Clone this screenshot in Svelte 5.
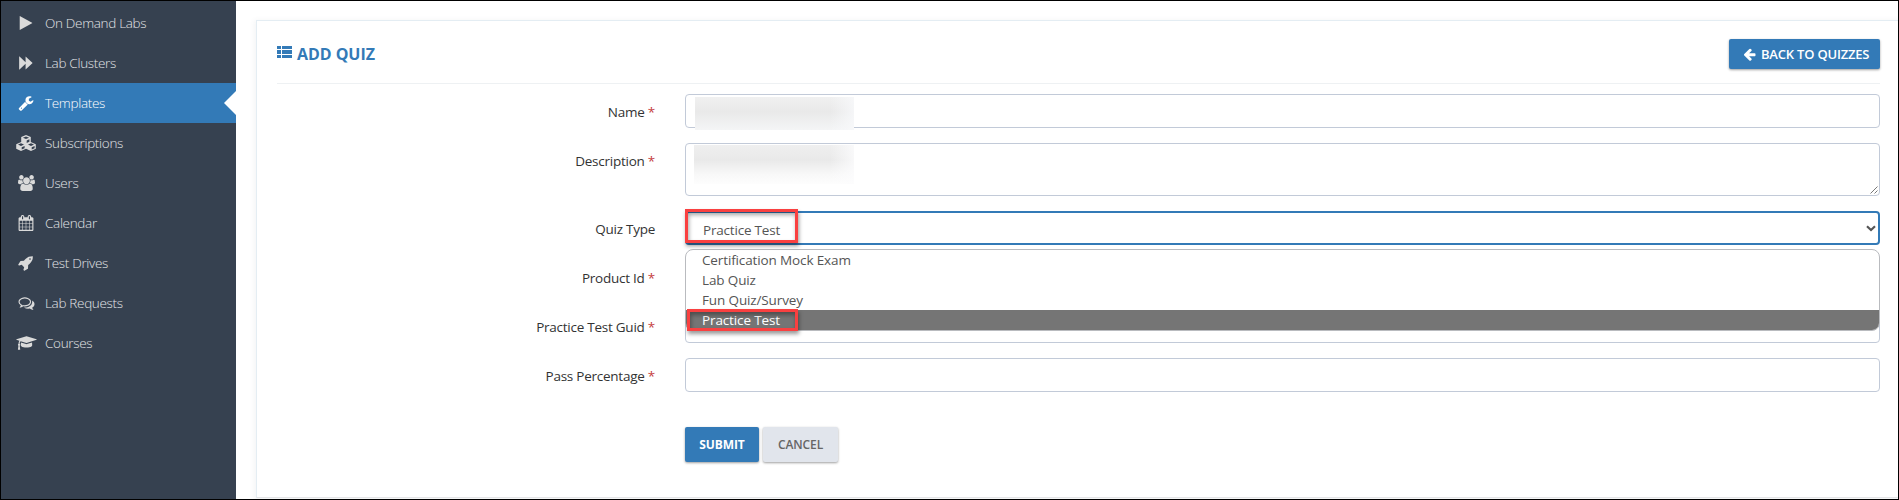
<script>
  const nav = [
    { label: 'On Demand Labs', box: '0 0 1792 1792', w: 16, d: 'M1576 927l-1328 738q-23 13-39.500 3t-16.500-36v-1472q0-26 16.500-36t39.500 3l1328 738q23 13 23 31t-23 31z' },
    { label: 'Lab Clusters', box: '0 0 1792 1792', w: 16, d: 'M170 160L850 820V160L1610 860Q1640 896 1610 932L850 1632V972L170 1632Q128 1660 128 1600V192Q128 132 170 160z' },
    { label: 'Templates', active: true, box: '0 0 1792 1792', w: 16, d: 'M448 1472q0-26-19-45t-45-19-45 19-19 45 19 45 45 19 45-19 19-45zm644-420l-682 682q-37 37-90 37-52 0-91-37l-106-108q-38-36-38-90 0-53 38-91l681-681q39 98 114.500 173.500t173.500 114.500zm634-435q0 39-23 106-47 134-164.500 217.500t-258.500 83.500q-185 0-316.500-131.500t-131.500-316.500 131.500-316.500 316.500-131.500q58 0 121.500 16.500t107.500 46.500q16 11 16 28t-16 28l-293 169v224l193 107q5-3 79-48.500t135.500-81 70.500-35.500q15 0 23.500 10t8.500 25z' },
    { label: 'Subscriptions', box: '0 0 20 16', w: 20, d: 'M10 0l4.800 2v5L19.800 9.200v4.600L15 16l-5-2.300L5 16 .2 13.800V9.200L5.200 7V2zM10 1.500L6.900 2.800 10 4.100l3.100-1.300zM10.700 5.500v2.400l2.700-1.200V4.300zM5 8.300L2 9.600 5 10.900 8 9.600zM5.700 12.200v2.300l2.900-1.300v-2.300zM15 8.300L12 9.600l3 1.300 3-1.300zM15.700 12.200v2.300l2.900-1.300v-2.300z' },
    { label: 'Users', box: '0 0 1920 1792', w: 17, d: 'M593 896q-162 5-265 128h-134q-82 0-138-40.500t-56-118.500q0-353 124-353 6 0 43.500 21t97.500 42.500 119 21.500q67 0 133-23-5 37-5 66 0 139 81 256zm1071 637q0 120-73 189.500t-194 69.500h-874q-121 0-194-69.500t-73-189.500q0-53 3.500-103.500t14-109 26.500-108.500 43-97.500 62-81 85.500-53.500 111.500-20q10 0 43 21.500t73 48 107 48 135 21.500 135-21.500 107-48 73-48 43-21.500q61 0 111.500 20t85.500 53.500 62 81 43 97.500 26.500 108.500 14 109 3.500 103.500zm-1024-1277q0 106-75 181t-181 75-181-75-75-181 75-181 181-75 181 75 75 181zm704 384q0 159-112.500 271.500t-271.500 112.500-271.500-112.500-112.500-271.500 112.500-271.500 271.500-112.500 271.500 112.500 112.500 271.500zm576 225q0 78-56 118.500t-138 40.500h-134q-103-123-265-128 81-117 81-256 0-29-5-66 66 23 133 23 59 0 119-21.500t97.500-42.500 43.500-21q124 0 124 353zm-128-609q0 106-75 181t-181 75-181-75-75-181 75-181 181-75 181 75 75 181z' },
    { label: 'Calendar', box: '0 0 1792 1792', w: 16, d: 'M192 1664h288v-288h-288v288zm352 0h320v-288h-320v288zm-352-352h288v-320h-288v320zm352 0h320v-320h-320v320zm-352-384h288v-288h-288v288zm736 736h320v-288h-320v288zm-384-736h320v-288h-320v288zm768 736h288v-288h-288v288zm-384-352h320v-320h-320v320zm-352-864v-288q0-13-9.500-22.500t-22.500-9.500h-64q-13 0-22.500 9.500t-9.500 22.500v288q0 13 9.500 22.500t22.500 9.500h64q13 0 22.500-9.500t9.500-22.500zm736 864h288v-320h-288v320zm-384-384h320v-288h-320v288zm384 0h288v-288h-288v288zm32-480v-288q0-13-9.500-22.500t-22.500-9.500h-64q-13 0-22.500 9.500t-9.500 22.500v288q0 13 9.500 22.500t22.500 9.500h64q13 0 22.500-9.500t9.500-22.500zm384-64v1280q0 52-38 90t-90 38h-1408q-52 0-90-38t-38-90v-1280q0-52 38-90t90-38h128v-96q0-66 47-113t113-47h64q66 0 113 47t47 113v96h384v-96q0-66 47-113t113-47h64q66 0 113 47t47 113v96h128q52 0 90 38t38 90z' },
    { label: 'Test Drives', box: '0 0 1792 1792', w: 16, d: 'M1440 448q0-40-28-68t-68-28-68 28-28 68 28 68 68 28 68-28 28-68zm224-288q0 249-75.500 430.500t-253.500 360.500q-81 80-195 176l-20 379q-2 16-16 26l-384 224q-7 4-16 4-12 0-23-9l-64-64q-13-14-8-32l85-276-281-281-276 85q-3 1-9 1-14 0-23-9l-64-64q-17-19-5-39l224-384q10-14 26-16l379-20q96-114 176-195 188-187 358-258t431-71q14 0 24 9.500t10 22.500z' },
    { label: 'Lab Requests', box: '0 0 1792 1792', w: 17, d: 'M704 384q-153 0-286 52t-211.500 141-78.500 191q0 82 53 158t149 132l97 56-35 84q34-20 62-39l44-31 53 10q78 14 153 14 153 0 286-52t211.500-141 78.500-191-78.500-191-211.500-141-286-52zm0-128q191 0 353.500 68.500t256.500 186.500 94 257-94 257-256.500 186.500-353.500 68.500q-86 0-176-16-124 88-278 128-36 9-86 16h-3q-11 0-20.500-8t-11.500-21q-1-3-1-6.500t.5-6.500 2-6l2.500-5 3.500-5.500 4-5 4.500-5 4-4.500q5-6 23-25t26-29.500 22.500-29 25-38.500 20.500-44q-124-72-195-177t-71-224q0-139 94-257t256.500-186.500 353.500-68.500zm822 1169q10 24 20.500 44t25 38.500 22.500 29 26 29.500 23 25q1 1 4 4.500t4.500 5 4 5 3.500 5.500l2.500 5 2 6 .5 6.500-1 6.500q-3 14-13 22t-22 7q-50-7-86-16-154-40-278-128-90 16-176 16-271 0-472-132 58 4 88 4 161 0 309-45t264-129q125-92 192-212t67-254q0-77-23-152 129 71 204 178t75 230q0 120-71 224.500t-195 176.500z' },
    { label: 'Courses', box: '0 0 2304 1792', w: 21, d: 'M1774 836l18 316q4 69-82 128t-235 93.500-323 34.500-323-34.500-235-93.500-82-128l18-316 574 181q22 7 48 7t48-7zm530-324q0 23-22 31l-1120 352q-4 1-10 1t-10-1l-652-206q-43 34-71 111.500t-34 178.500q63 36 63 109 0 69-58 107l58 433q2 14-8 25-9 11-24 11h-192q-15 0-24-11-10-11-8-25l58-433q-58-38-58-107 0-73 65-111 11-207 98-330l-333-104q-22-8-22-31t22-31l1120-352q4-1 10-1t10 1l1120 352q22 8 22 31z' }
  ];
  const options = ['Certification Mock Exam', 'Lab Quiz', 'Fun Quiz/Survey', 'Practice Test'];
  const selected = 'Practice Test';
</script>

<div class="page">
  <nav>
    {#each nav as item}
      <a class:active={item.active}>
        <span class="ico"><svg viewBox={item.box} width={item.w} height="16"><path fill-rule="evenodd" d={item.d} /></svg></span>
        <span>{item.label}</span>
      </a>
    {/each}
  </nav>
  <main>
    <section class="card">
      <header>
        <h1>
          <svg width="15" height="12" viewBox="0 0 15 12"><path d="M0 0h4v3H0zM5 0h10v3H5zM0 4h4v4H0zM5 4h10v4H5zM0 9h4v3H0zM5 9h10v3H5z" /></svg>
          <span>ADD QUIZ</span>
        </h1>
        <button class="btn back">
          <svg width="13" height="13" viewBox="64 100 1664 1664"><path d="M1664 896v128q0 53-32.500 90.500t-84.500 37.500h-704l293 294q38 36 38 90t-38 90l-75 76q-37 37-90 37-52 0-91-37l-651-652q-37-37-37-90 0-52 37-91l651-650q38-38 91-38 52 0 90 38l75 74q38 38 38 91t-38 91l-293 293h704q52 0 84.500 37.500t32.500 90.500z" /></svg>
          <span>BACK TO QUIZZES</span>
        </button>
      </header>
      <form>
        <div class="row"><span class="lab">Name <i>*</i></span><div class="field"><div class="blur one"></div></div></div>
        <div class="row"><span class="lab">Description <i>*</i></span>
          <div class="field area"><div class="blur two"></div>
            <svg class="grip" width="8" height="8" viewBox="0 0 8 8"><path d="M.5 7.500l7-7M4.500 7.500l3-3" /></svg>
          </div>
        </div>
        <div class="row"><span class="lab">Quiz Type</span>
          <div class="field select"><span class="value">{selected}</span>
            <svg class="chev" width="10" height="7" viewBox="0 0 10 7"><path d="M1 1.300l4 3.700 4-3.700" /></svg>
            <div class="mark m1"></div>
            <div class="menu">
              {#each options as o}
                <div class="opt" class:on={o === selected}>{o}</div>
              {/each}
            </div>
            <div class="mark m2"></div>
          </div>
        </div>
        <div class="row"><span class="lab">Product Id <i>*</i></span><div class="field"></div></div>
        <div class="row"><span class="lab">Practice Test Guid <i>*</i></span><div class="field"></div></div>
        <div class="row"><span class="lab">Pass Percentage <i>*</i></span><div class="field"></div></div>
        <div class="actions">
          <button type="button" class="btn submit">SUBMIT</button>
          <button type="button" class="btn cancel">CANCEL</button>
        </div>
      </form>
    </section>
  </main>
</div>

<style>
  * { box-sizing: border-box; }
  .page {
    width: 1899px; height: 500px; border: 1px solid #000; display: flex; overflow: hidden;
    background: #fff; font: 13.5px/20px "Open Sans", sans-serif; color: #333;
  }
  nav { width: 235px; flex: none; background: #364150; padding-top: 2px; }
  a { position: relative; display: flex; align-items: center; height: 40px; padding-left: 13px; color: #e2e4e7; font-weight: 300; letter-spacing: -0.32px; }
  .ico { width: 24px; margin-right: 7px; display: flex; justify-content: center; margin-top: -1px; }
  .ico svg { fill: #dadada; flex: none; }
  a.active { background: #337ab7; color: #fff; }
  a.active svg { fill: #fff; }
  a.active::after {
    content: ""; position: absolute; right: 0; top: 8px;
    border: solid transparent; border-width: 12px 12px 12px 0; border-right-color: #fff;
  }
  main { flex: 1; padding: 19px 0 0 20px; min-width: 0; }
  .card { width: 1660px; height: 478px; border: 1px solid #e4edf3; border-bottom: 1px solid #e4e5e7; padding: 0 0 0 20px; box-shadow: 0 2px 5px 2px rgba(60, 80, 100, .06); }
  header { width: 1603px; height: 63px; display: flex; justify-content: space-between; border-bottom: 1px solid #eef1f3; }
  h1 { margin: 23px 0 0; height: 20px; display: flex; gap: 5px; color: #337ab7; font-size: 16px; line-height: 20px; font-weight: 700; letter-spacing: -0.05px; }
  h1 svg { fill: #337ab7; margin-top: 2px; }
  .btn { border: 0; border-radius: 2px; color: #fff; background: #337ab7; font: 600 13px/20px "Open Sans", sans-serif; box-shadow: 0 1px 3px rgba(0, 0, 0, .2), 0 1px 2px rgba(0, 0, 0, .2); padding: 0; white-space: nowrap; }
  .back { margin-top: 18px; width: 151px; height: 30px; display: flex; align-items: center; gap: 5px; padding-left: 14px; letter-spacing: -0.2px; }
  .back svg { fill: #fff; }
  form { width: 1603px; padding-top: 10px; display: flex; flex-direction: column; gap: 15px; }
  .row { display: flex; align-items: flex-start; }
  .lab { width: 378px; margin-right: 30px; padding-top: 8px; text-align: right; letter-spacing: -0.25px; white-space: nowrap; }
  i { color: #c5403e; font-style: normal; }
  .field { position: relative; width: 1195px; height: 34px; border: 1px solid #c2cad8; border-radius: 4px; background: #fff; }
  .area { height: 53px; }
  .blur { position: absolute; }
  .one { left: 9px; top: 2px; width: 159px; height: 33px; background: linear-gradient(90deg, transparent 85%, rgba(248, 249, 251, .8)), linear-gradient(#f0f0f0, #e9e9e9 45%, #f4f5f6); }
  .two { left: 8px; top: 1px; width: 160px; height: 39px; background: linear-gradient(90deg, transparent 85%, rgba(252, 252, 253, .8)), linear-gradient(#efefef, #e9e9e9 38%, #f8f8f8 75%, #fdfdfd); }
  .grip { position: absolute; right: 1px; bottom: 1px; stroke: #555; fill: none; stroke-width: .8; }
  .select { border: 2px solid #337ab7; display: flex; align-items: center; justify-content: space-between; padding: 2px 2px 0 16px; }
  .value { color: #555; letter-spacing: -0.2px; padding-top: 1px; }
  .chev { fill: none; stroke: #555; stroke-width: 2.200; margin-top: -2px; }
  .menu { position: absolute; z-index: 2; left: -2px; top: 36px; width: 1195px; height: 82px; border: 1px solid #b9bbbf; border-radius: 8px; background: #fff; overflow: hidden; }
  .opt { height: 20px; line-height: 20px; padding-left: 16px; color: #555; letter-spacing: -0.13px; }
  .on { background: #757575; color: #fff; }
  .mark { position: absolute; z-index: 3; border: 3px solid #f94040; box-shadow: 1px 3px 4px rgba(0, 0, 0, .4), inset 1px 3px 4px rgba(0, 0, 0, .35); }
  .m1 { left: -2px; top: -4px; width: 113px; height: 34px; }
  .m2 { left: 0; top: 96px; width: 111px; height: 22px; }
  .actions { display: flex; gap: 4px; padding: 20px 0 0 408px; }
  .actions .btn { height: 35px; font-size: 12px; letter-spacing: -0.1px; }
  .submit { width: 74px; font-weight: 700; }
  .cancel { width: 75px; background: #e1e5ec; color: #666; }
</style>
